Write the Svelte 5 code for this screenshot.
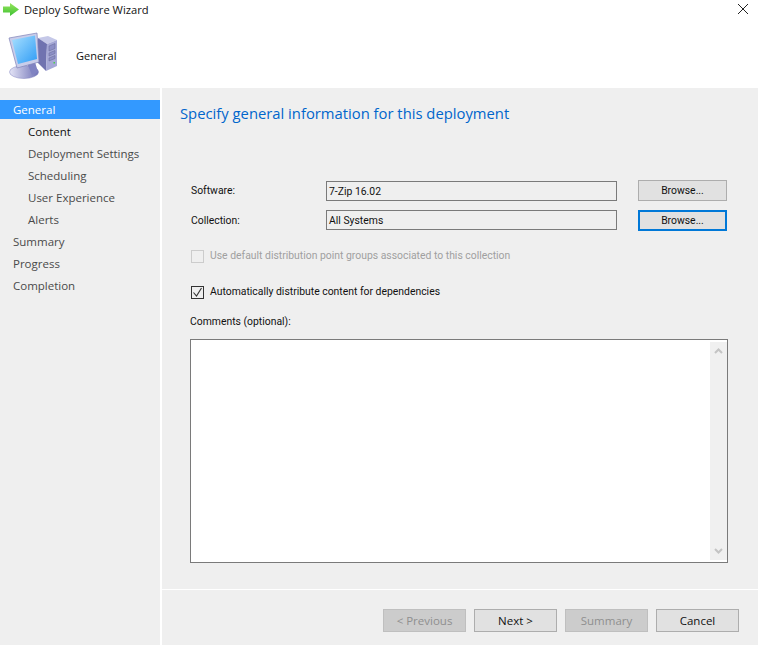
<script lang="ts">
  const steps = [
    { label: 'General', selected: true },
    { label: 'Content', sub: true, current: true },
    { label: 'Deployment Settings', sub: true },
    { label: 'Scheduling', sub: true },
    { label: 'User Experience', sub: true },
    { label: 'Alerts', sub: true },
    { label: 'Summary' },
    { label: 'Progress' },
    { label: 'Completion' }
  ];
</script>

<div class="wizard">
  <div class="titlebar">
    <svg class="arrow" width="16" height="13" viewBox="0 0 16 13">
      <defs>
        <linearGradient id="arrowFill" x1="0" y1="0" x2="0" y2="1">
          <stop offset="0" stop-color="#98e65e" />
          <stop offset="1" stop-color="#3cc032" />
        </linearGradient>
      </defs>
      <path d="M0 3.5h7V0l9 6.5-9 6.5V9.5H0z" fill="url(#arrowFill)" />
    </svg>
    <span class="title">Deploy Software Wizard</span>
    <svg class="close" width="12" height="12" viewBox="0 0 12 12">
      <path d="M1 1l10 10M11 1L1 11" stroke="#222" stroke-width="1" fill="none" />
    </svg>
  </div>

  <div class="header">
    <svg class="computer" width="52" height="52" viewBox="8 30 52 52">
      <defs>
        <linearGradient id="screenFill" x1="0" y1="0" x2="1" y2="1">
          <stop offset="0" stop-color="#a8e0ff" />
          <stop offset="1" stop-color="#2f9cf5" />
        </linearGradient>
        <linearGradient id="standFill" x1="0" y1="0" x2="1" y2="0">
          <stop offset="0" stop-color="#e4e4f6" />
          <stop offset="1" stop-color="#6f72b6" />
        </linearGradient>
      </defs>
      <!-- tower -->
      <path d="M38 38l10-2 9 4-10 4z" fill="#c5c8e8" />
      <path d="M38 38l9 6-1 27-9-9z" fill="#7073b0" />
      <path d="M47 44l10-4v26l-11 5z" fill="#a5a8d6" />
      <path d="M49 46l6-2.500v5l-6 2.500zM49 53l6-2.500v3l-6 2.500zM49 58l6-2.500v3l-6 2.500z" fill="#8c8fc6" stroke="#666996" stroke-width="0.5" />
      <rect x="53.500" y="62" width="1.500" height="1.500" fill="#48d048" />
      <!-- stand -->
      <ellipse cx="24" cy="72" rx="14.500" ry="6.500" fill="url(#standFill)" stroke="#8285c0" stroke-width="0.5" />
      <path d="M27 63l8-1 3 10-6 3z" fill="#8083c2" />
      <!-- monitor -->
      <path d="M9 38l28-5 2 29-22 6z" fill="#c9cdea" stroke="#7f82b8" stroke-width="0.7" />
      <path d="M12 40l23-4.500 2 23.500-19 5z" fill="url(#screenFill)" />
    </svg>
    <span class="header-label">General</span>
  </div>

  <div class="body">
    <nav class="sidebar">
      {#each steps as step}
        <div class="step" class:sub={step.sub} class:selected={step.selected} class:current={step.current}>
          <span>{step.label}</span>
        </div>
      {/each}
    </nav>

    <div class="main">
      <div class="content">
        <h1>Specify general information for this deployment</h1>

        <div class="row first">
          <label for="software">Software:</label>
          <div class="field" id="software">7-Zip 16.02</div>
          <button>Browse...</button>
        </div>
        <div class="row second">
          <label for="collection">Collection:</label>
          <div class="field" id="collection">All Systems</div>
          <button class="focused">Browse...</button>
        </div>

        <div class="check disabled">
          <span class="box"></span>
          <span class="check-text">Use default distribution point groups associated to this collection</span>
        </div>
        <div class="check on">
          <span class="box">
            <svg width="11" height="11" viewBox="0 0 11 11">
              <path d="M1.500 5.500l3 3.500 5-8" stroke="#333" stroke-width="1.100" fill="none" />
            </svg>
          </span>
          <span class="check-text">Automatically distribute content for dependencies</span>
        </div>

        <div class="comments-label">Comments (optional):</div>
        <div class="comments">
          <div class="scrollbar">
            <svg width="9" height="6" viewBox="0 0 9 6">
              <path d="M1 5l3.500-3.500L8 5" stroke="#c4c4c4" stroke-width="2" fill="none" />
            </svg>
            <svg width="9" height="6" viewBox="0 0 9 6">
              <path d="M1 1l3.500 3.500L8 1" stroke="#c4c4c4" stroke-width="2" fill="none" />
            </svg>
          </div>
        </div>
      </div>

      <div class="footer">
        <button disabled>&lt; Previous</button>
        <button>Next &gt;</button>
        <button disabled>Summary</button>
        <button>Cancel</button>
      </div>
    </div>
  </div>
</div>

<style>
  :global(body) {
    margin: 0;
    background: #fff;
  }

  .wizard {
    width: 758px;
    height: 645px;
    display: flex;
    flex-direction: column;
    font-family: "Open Sans", "Noto Sans", sans-serif;
    font-size: 11.5px;
    color: #111;
    overflow: hidden;
  }

  .titlebar {
    height: 18px;
    margin-bottom: 2px;
    display: flex;
    align-items: center;
    padding-left: 3px;
    flex: none;
  }

  .arrow {
    margin-right: 5px;
  }

  .title {
    flex: 1;
    font-size: 11.2px;
  }

  .close {
    margin-right: 9px;
  }

  .header {
    height: 68px;
    flex: none;
    display: flex;
    align-items: center;
    padding-left: 8px;
    box-sizing: border-box;
    padding-top: 4px;
  }

  .computer {
    margin-right: 16px;
  }

  .header-label {
    font-size: 11px;
    margin-top: -1px;
  }

  .body {
    flex: 1;
    display: flex;
    gap: 2px;
    min-height: 0;
  }

  .sidebar {
    width: 160px;
    background: #efefef;
    padding-top: 12px;
    flex: none;
  }

  .step {
    height: 22px;
    padding-left: 13px;
    color: #4a4a4a;
    line-height: 19px;
  }

  .step span {
    display: block;
  }

  .step.sub {
    padding-left: 28px;
  }

  .step.current {
    color: #111;
  }

  .step.selected {
    background: #3399ff;
    color: #fff;
    height: 19px;
    margin-bottom: 3px;
  }

  .main {
    flex: 1;
    background: #efefef;
    display: flex;
    flex-direction: column;
  }

  .content {
    height: 502px;
    padding-left: 18px;
    border-bottom: 1px solid #fff;
    box-sizing: border-box;
    font-family: Roboto, "Open Sans", sans-serif;
    font-size: 10.4px;
  }

  h1 {
    margin: 14px 0 0;
    font-family: "Open Sans", sans-serif;
    font-size: 14.8px;
    line-height: 22px;
    font-weight: 400;
    color: #0066cc;
  }

  .row {
    display: flex;
    align-items: center;
    height: 21px;
    margin-top: 9px;
    margin-left: 11px;
  }

  .row.first {
    margin-top: 56px;
  }

  .row.second {
    align-items: flex-start;
  }

  label {
    width: 135px;
    flex: none;
  }

  .row.second label {
    line-height: 21px;
  }

  .field {
    width: 291px;
    height: 20px;
    line-height: 19px;
    box-sizing: border-box;
    border: 1px solid #7a7a7a;
    padding-left: 2px;
    flex: none;
  }

  button {
    font: inherit;
    color: #111;
    width: 83px;
    height: 23px;
    padding: 0;
    background: #e1e1e1;
    border: 1px solid #adadad;
    box-sizing: border-box;
  }

  .footer button {
    font-family: "Open Sans", sans-serif;
    font-size: 11.5px;
  }

  button:disabled {
    background: #cccccc;
    border-color: #bfbfbf;
    color: #8f8f8f;
  }

  .row button {
    width: 89px;
    height: 21px;
    margin-left: 21px;
  }

  .row button.focused {
    border: 2px solid #0078d7;
  }

  .check {
    display: flex;
    align-items: center;
    gap: 6px;
    height: 14px;
    margin-left: 11px;
  }

  .check-text {
    line-height: 12px;
    margin-top: -1px;
  }

  .check.disabled {
    margin-top: 18px;
    color: #a0a0a0;
  }

  .check.on {
    margin-top: 22px;
  }

  .box {
    width: 13px;
    height: 13px;
    box-sizing: border-box;
    border: 1px solid #333;
    display: flex;
    align-items: center;
    justify-content: center;
  }

  .check.disabled .box {
    border-color: #ccc;
  }

  .comments-label {
    margin: 15px 0 0 10px;
    line-height: 16px;
  }

  .comments {
    margin: 9px 0 0 10px;
    width: 538px;
    height: 224px;
    box-sizing: border-box;
    border: 1px solid #7a7a7a;
    background: #fff;
    display: flex;
    justify-content: flex-end;
    padding: 2px 0 2px;
  }

  .scrollbar {
    width: 17px;
    background: #f0f0f0;
    display: flex;
    flex-direction: column;
    align-items: center;
    justify-content: space-between;
    padding: 6px 0;
    box-sizing: border-box;
  }

  .footer {
    flex: 1;
    display: flex;
    justify-content: flex-end;
    align-items: flex-start;
    gap: 8px;
    padding: 19px 19px 0 0;
  }
</style>
